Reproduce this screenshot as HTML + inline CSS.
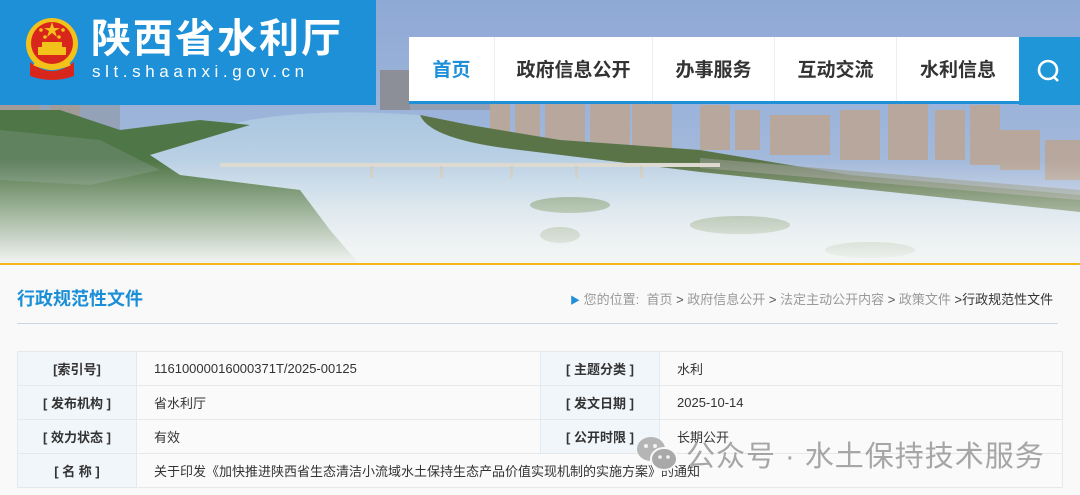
<!DOCTYPE html>
<html><head><meta charset="utf-8"><style>
*{margin:0;padding:0;box-sizing:border-box}
body{width:1080px;height:495px;overflow:hidden;background:#f9f9f9;font-family:"Liberation Sans","Noto Sans CJK SC",sans-serif;position:relative}
.abs{position:absolute}
.logo{left:0;top:0;width:376px;height:105px;background:#1e90d8}
.nav{left:409px;top:37px;width:610px;height:67px;background:#fff;border-bottom:3px solid #1e90d8;display:flex}
.nav div{height:64px;line-height:68px;font-size:19px;font-weight:bold;color:#333;text-align:center;border-right:1px solid #eee}
.search{left:1019px;top:37px;width:61px;height:68px;background:#1e96d8}
.title{left:17px;top:285px;font-size:18px;color:#1a8ed6;font-weight:bold}
.crumb{left:570px;top:289px;font-size:13px;color:#999}
.line{left:17px;top:323px;width:1041px;height:1px;background:#c8d6e0}
table{position:absolute;left:17px;top:351px;width:1046px;border-collapse:collapse;font-size:13px;color:#333}
td{border:1px solid #e6e9ec;height:34px;padding-left:17px;background:#fafafa}
td.l{background:#f1f6fb;text-align:center;font-weight:bold;padding-left:0}
</style></head><body>
<svg class="abs" style="left:0;top:0" width="1080" height="265">
<defs>
<linearGradient id="sky" x1="0" y1="0" x2="0" y2="1"><stop offset="0" stop-color="#8fa9d6"/><stop offset="0.5" stop-color="#9fb6da"/><stop offset="1" stop-color="#b6c6dd"/></linearGradient>
<linearGradient id="riv" x1="0" y1="0" x2="0" y2="1"><stop offset="0" stop-color="#aac6e0"/><stop offset="1" stop-color="#dde8ee"/></linearGradient>
<linearGradient id="fade" x1="0" y1="0" x2="0" y2="1"><stop offset="0" stop-color="#f4f6f5" stop-opacity="0"/><stop offset="1" stop-color="#f4f6f5" stop-opacity="1"/></linearGradient>
</defs>
<rect width="1080" height="265" fill="url(#sky)"/>
<!-- skyline -->
<g fill="#b7a79c">
<rect x="0" y="100" width="40" height="70"/><rect x="50" y="95" width="30" height="50"/>
<rect x="490" y="95" width="20" height="50"/><rect x="515" y="85" width="25" height="60"/><rect x="545" y="90" width="40" height="55"/><rect x="590" y="80" width="40" height="65"/><rect x="632" y="85" width="40" height="70"/>
<rect x="700" y="105" width="30" height="45"/><rect x="735" y="110" width="25" height="40"/><rect x="770" y="115" width="60" height="40"/>
<rect x="840" y="110" width="40" height="50"/><rect x="888" y="100" width="40" height="60"/><rect x="935" y="110" width="30" height="50"/><rect x="970" y="105" width="30" height="60"/>
<rect x="1000" y="130" width="40" height="40"/><rect x="1045" y="140" width="35" height="40"/>
</g>
<g fill="#8c8f98"><rect x="0" y="100" width="120" height="30" opacity=".5"/><rect x="380" y="70" width="30" height="40"/><rect x="410" y="90" width="80" height="20" opacity=".6"/></g>
<!-- river -->
<path d="M60 200 Q150 140 250 120 Q320 108 420 115 Q440 140 520 150 L700 170 L1080 210 L1080 265 L330 265 L300 220 Z" fill="url(#riv)"/>
<!-- far bank strip right -->
<path d="M420 115 Q430 140 520 150 L700 172 L1080 212 L1080 195 L850 175 L700 150 L560 140 L470 125 Z" fill="#5a7448"/>
<path d="M700 158 L1080 190 L1080 200 L700 168Z" fill="#8d9486" opacity=".7"/>
<!-- bridge -->
<rect x="220" y="163" width="500" height="4" fill="#dcd8cf"/>
<g fill="#cfcabe"><rect x="370" y="166" width="3" height="12"/><rect x="440" y="166" width="3" height="12"/><rect x="510" y="166" width="3" height="12"/><rect x="575" y="166" width="3" height="12"/><rect x="640" y="166" width="3" height="12"/></g>
<!-- left greenery -->
<path d="M0 110 L60 110 L120 130 L200 120 L250 125 L150 155 L180 175 L300 190 L330 230 L360 265 L0 265 Z" fill="#4f7646"/>
<path d="M0 130 L100 140 L160 170 L90 185 L0 180 Z" fill="#6e8a70" opacity=".6"/>
<!-- islands -->
<g fill="#6f8d5e" opacity=".8"><ellipse cx="570" cy="205" rx="40" ry="8"/><ellipse cx="740" cy="225" rx="50" ry="9"/><ellipse cx="870" cy="250" rx="45" ry="8"/><ellipse cx="560" cy="235" rx="20" ry="8"/></g>
<rect y="160" width="1080" height="105" fill="url(#fade)"/>
<rect y="263" width="1080" height="2" fill="#f5b619"/>
</svg>
<div class="abs logo"></div>
<svg class="abs" style="left:24px;top:14px" width="56" height="66" viewBox="0 0 56 66">
<circle cx="28" cy="30" r="26" fill="#f2c21a"/><circle cx="28" cy="29" r="21" fill="#d9261c"/>
<path d="M6 48 Q28 66 50 48 L50 62 Q28 70 6 62Z" fill="#d9261c"/>
<path d="M10 50 Q28 58 46 50" stroke="#f2c21a" stroke-width="3" fill="none"/>
<rect x="14" y="33" width="28" height="8" fill="#f2c21a"/><rect x="18" y="28" width="20" height="5" fill="#f2c21a"/>
<polygon points="28,8 30,14 36,14 31,17 33,23 28,19 23,23 25,17 20,14 26,14" fill="#f2c21a"/>
<circle cx="17" cy="16" r="1.8" fill="#f2c21a"/><circle cx="39" cy="16" r="1.8" fill="#f2c21a"/><circle cx="21" cy="23" r="1.8" fill="#f2c21a"/><circle cx="35" cy="23" r="1.8" fill="#f2c21a"/>
</svg>
<div class="abs" style="left:91px;top:14px;font-size:40px;font-weight:bold;color:#fff;letter-spacing:2px;line-height:50px">陕西省水利厅</div>
<div class="abs" style="left:92px;top:62px;font-size:17px;color:#fff;letter-spacing:4.6px">slt.shaanxi.gov.cn</div>
<div class="abs nav">
<div style="width:86px;color:#1e8fd8">首页</div>
<div style="width:158px">政府信息公开</div>
<div style="width:122px">办事服务</div>
<div style="width:122px">互动交流</div>
<div style="width:122px;border-right:none">水利信息</div>
</div>
<div class="abs search"><svg width="61" height="68"><circle cx="29" cy="33" r="9" stroke="#fff" stroke-width="2.6" fill="none"/><line x1="35" y1="40" x2="39" y2="44" stroke="#fff" stroke-width="2.6"/></svg></div>
<div class="abs title">行政规范性文件</div>
<div class="abs crumb"><span style="color:#1e8fd8;font-size:10px">▶</span> 您的位置:&nbsp; 首页 <span style="color:#555">&gt;</span> 政府信息公开 <span style="color:#555">&gt;</span> 法定主动公开内容 <span style="color:#555">&gt;</span> 政策文件 <span style="color:#333">&gt;行政规范性文件</span></div>
<div class="abs line"></div>
<table>
<tr><td class="l" style="width:119px">[索引号]</td><td style="width:404px">11610000016000371T/2025-00125</td><td class="l" style="width:119px">[ 主题分类 ]</td><td>水利</td></tr>
<tr><td class="l">[ 发布机构 ]</td><td>省水利厅</td><td class="l">[ 发文日期 ]</td><td>2025-10-14</td></tr>
<tr><td class="l">[ 效力状态 ]</td><td>有效</td><td class="l">[ 公开时限 ]</td><td>长期公开</td></tr>
<tr><td class="l">[ 名 称 ]</td><td colspan="3">关于印发《加快推进陕西省生态清洁小流域水土保持生态产品价值实现机制的实施方案》的通知</td></tr>
</table>
<svg class="abs" style="left:636px;top:434px" width="44" height="40"><ellipse cx="15" cy="15" rx="14" ry="12" fill="#b5b5b5"/><ellipse cx="28" cy="25" rx="13" ry="11" fill="#a9a9a9" stroke="#f9f9f9" stroke-width="2"/><circle cx="10" cy="12" r="2" fill="#f3f3f3"/><circle cx="19" cy="12" r="2" fill="#f3f3f3"/><circle cx="24" cy="23" r="1.8" fill="#f3f3f3"/><circle cx="32" cy="23" r="1.8" fill="#f3f3f3"/></svg>
<div class="abs" style="left:686px;top:433px;font-size:29px;color:rgba(150,150,150,0.85);letter-spacing:1px;white-space:nowrap">公众号 · 水土保持技术服务</div>
</body></html>
